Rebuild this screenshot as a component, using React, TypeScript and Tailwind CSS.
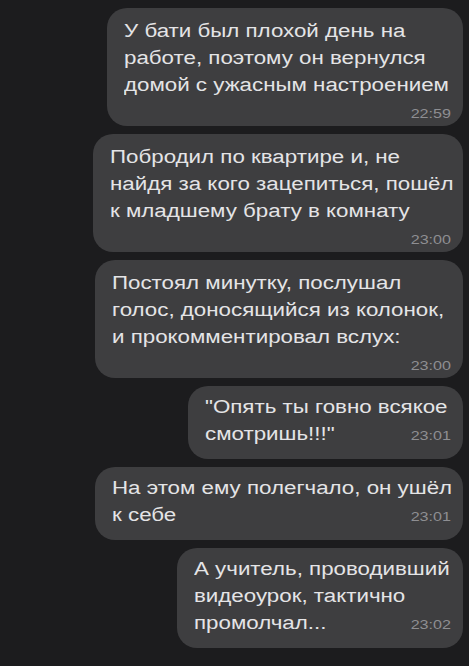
import React from "react";

type Msg = {
  lines: string[];
  time: string;
  width: string;
  inlineTime?: boolean;
};

const messages: Msg[] = [
  {
    lines: [
      "У бати был плохой день на",
      "работе, поэтому он вернулся",
      "домой с ужасным настроением",
    ],
    time: "22:59",
    width: "w-[356px]",
  },
  {
    lines: [
      "Побродил по квартире и, не",
      "найдя за кого зацепиться, пошёл",
      "к младшему брату в комнату",
    ],
    time: "23:00",
    width: "w-[370px]",
  },
  {
    lines: [
      "Постоял минутку, послушал",
      "голос, доносящийся из колонок,",
      "и прокомментировал вслух:",
    ],
    time: "23:00",
    width: "w-[368px]",
  },
  {
    lines: ['"Опять ты говно всякое', 'смотришь!!!"'],
    time: "23:01",
    width: "w-[275px]",
    inlineTime: true,
  },
  {
    lines: ["На этом ему полегчало, он ушёл", "к себе"],
    time: "23:01",
    width: "w-[368px]",
    inlineTime: true,
  },
  {
    lines: ["А учитель, проводивший", "видеоурок, тактично", "промолчал..."],
    time: "23:02",
    width: "w-[286px]",
    inlineTime: true,
  },
];

const Time = ({ t }: { t: string }) => (
  <span className="text-[13px] leading-none text-[#8e8e92]">{t}</span>
);

const Bubble = ({ m }: { m: Msg }) => {
  const last = m.lines.length - 1;
  return (
    <div
      className={`${m.width} self-end rounded-[20px] bg-[#3e3e40] pl-[17px] pr-[12px] ${
        m.inlineTime ? "pt-[8px] pb-[11px]" : "pt-[10px] pb-[6px]"
      }`}
    >
      {/* the screenshot is stretched sideways, so the text is too */}
      <div className="w-[80.65%] origin-left scale-x-[1.24]">
        {m.lines.map((line, i) =>
          m.inlineTime && i === last ? (
            <div key={i} className="flex items-baseline justify-between leading-[27px]">
              <span>{line}</span>
              <Time t={m.time} />
            </div>
          ) : (
            <div key={i} className="leading-[27px] whitespace-nowrap">
              {line}
            </div>
          )
        )}
        {!m.inlineTime && (
          <div className="mt-[8px] text-right text-[13px] leading-none">
            <Time t={m.time} />
          </div>
        )}
      </div>
    </div>
  );
};

export default function App() {
  return (
    <div
      className="w-[469px] h-[666px] overflow-hidden bg-[#1c1c1e] text-[18px] text-[#e4e4e6]"
      style={{ fontFamily: '"Liberation Sans", Arial, sans-serif' }}
    >
      <div className="flex flex-col gap-[8px] pt-[8px] pr-[6px]">
        {messages.map((m, i) => (
          <Bubble key={i} m={m} />
        ))}
      </div>
    </div>
  );
}
